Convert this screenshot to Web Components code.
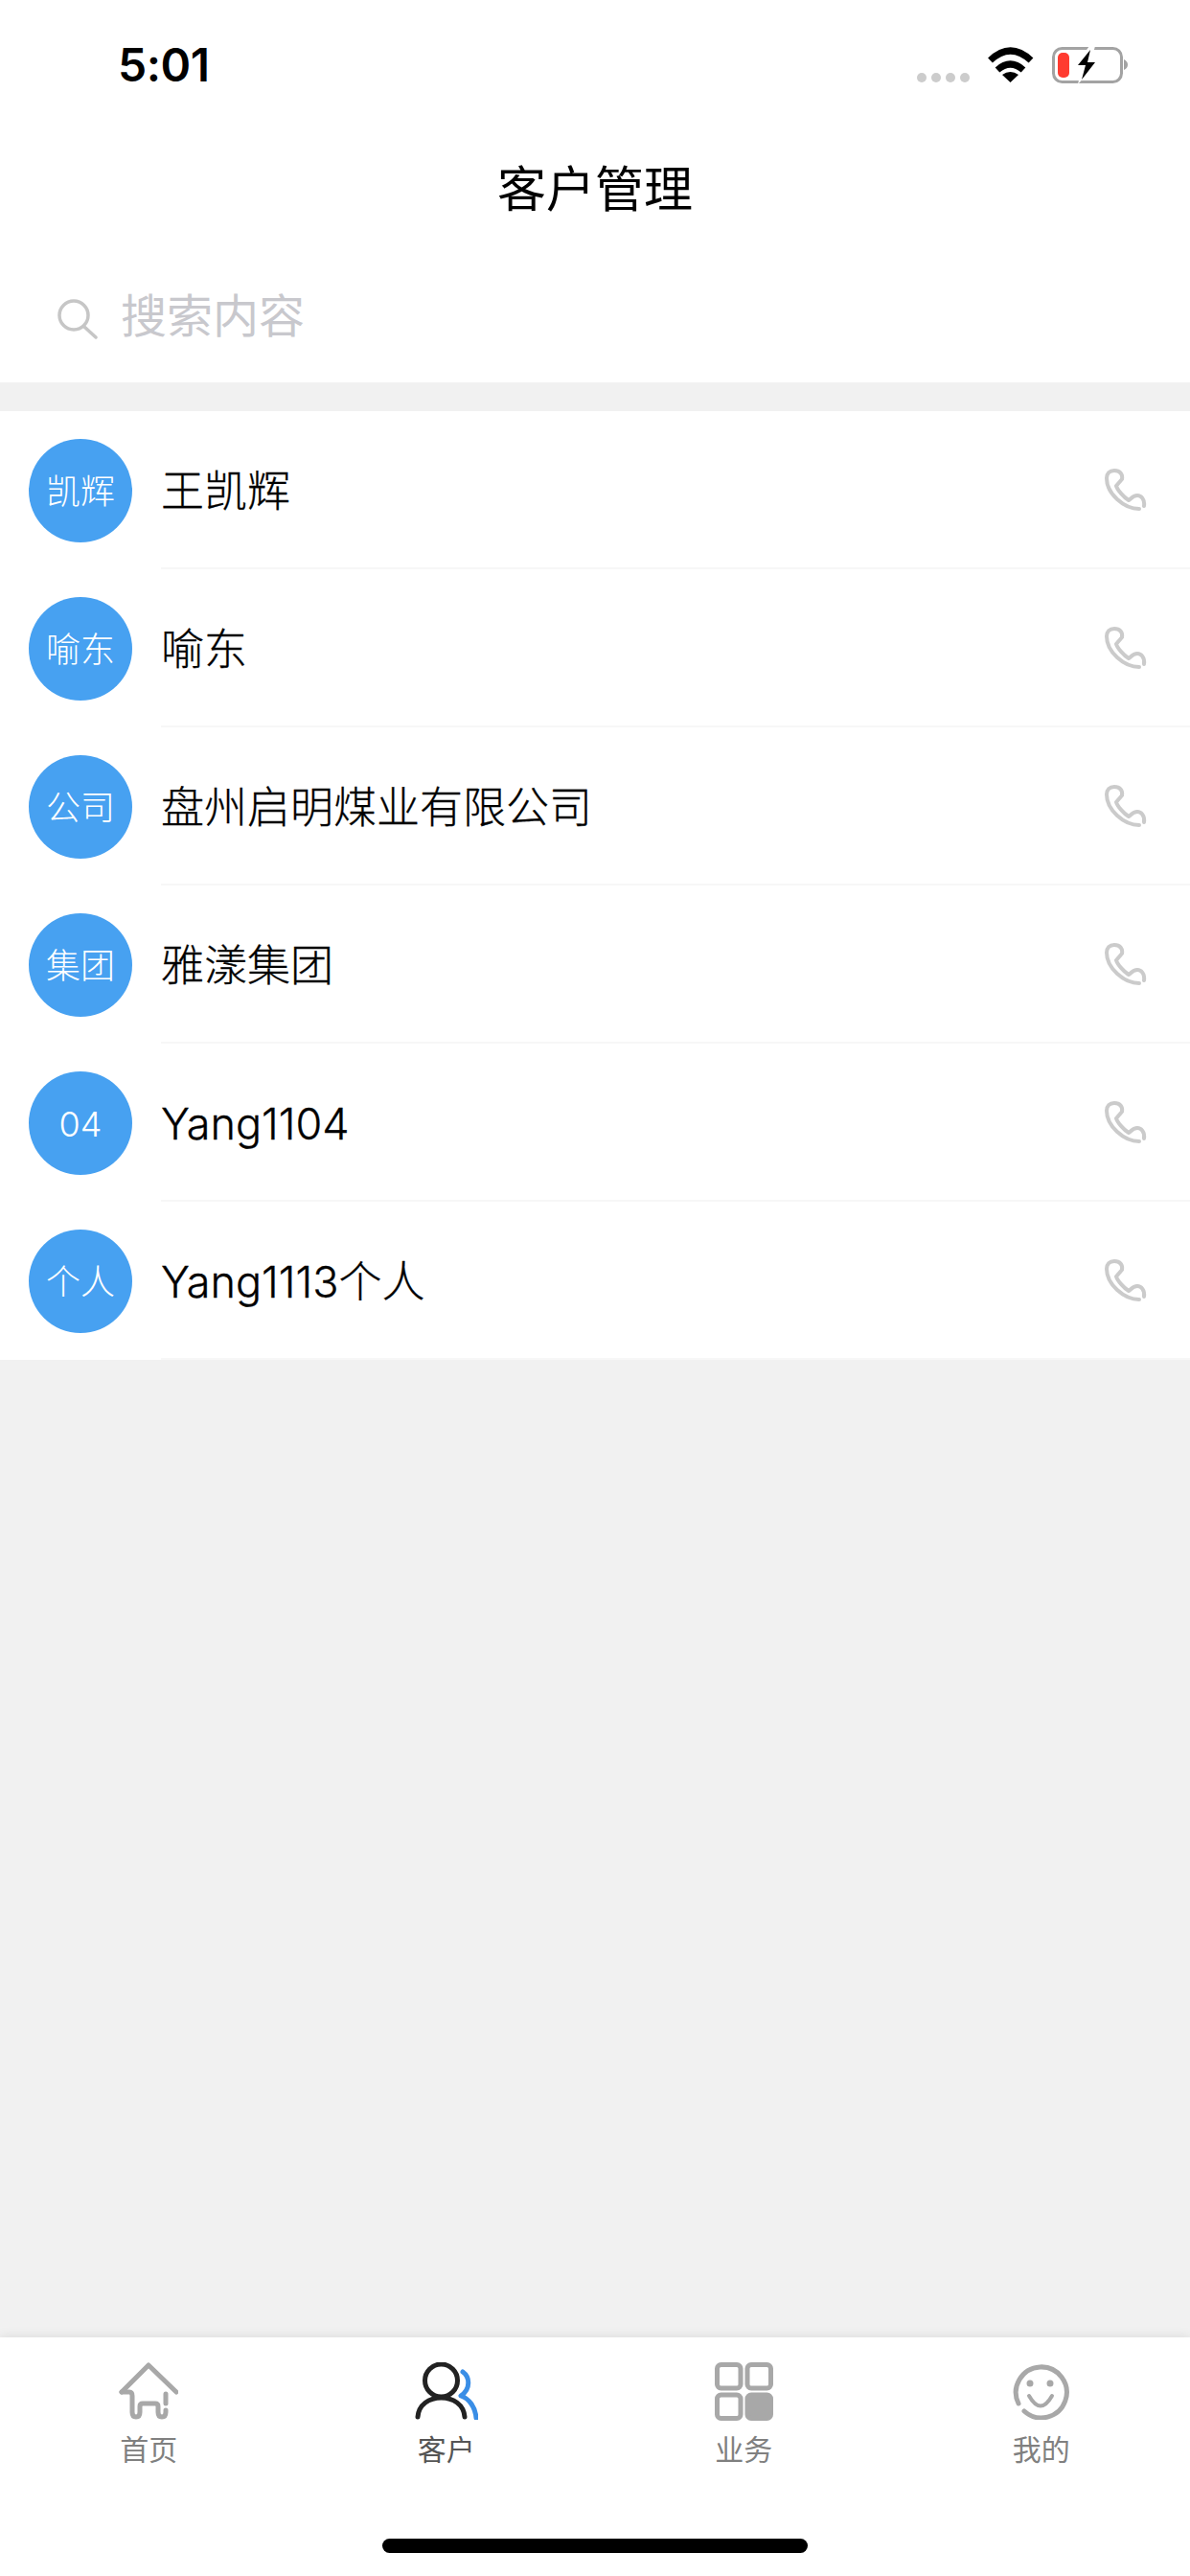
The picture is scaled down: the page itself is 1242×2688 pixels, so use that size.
<!DOCTYPE html>
<html lang="zh">
<head>
<meta charset="utf-8">
<title>客户管理</title>
<style>
html, body { margin: 0; padding: 0; background: #f1f1f1; }
body { width: 1242px; height: 2688px; font-family: Inter, "Noto Sans CJK SC", sans-serif; }
</style>
</head>
<body>
<client-app></client-app>
<script>
class StatusBar extends HTMLElement {
    constructor() {
        super();
        this.attachShadow({ mode: 'open' });
        this.shadowRoot.innerHTML = /*html*/`
        <style>
        :host { display: flex; height: 130px; box-sizing: border-box; padding: 45px 65px 0 123px; justify-content: space-between; align-items: flex-start; background: #fff; }
        .time { font: 600 48px/46px Inter, "Liberation Sans", sans-serif; color: #000; letter-spacing: -0.5px; }
        .icons { display: flex; align-items: flex-end; padding-top: 4px; }
        .dots { display: flex; gap: 5px; margin-right: 18px; margin-bottom: 1px; }
        .dots i { width: 10px; height: 10px; border-radius: 50%; background: #ccc; }
        svg { display: block; }
        .wifi { margin-right: 18px; }
        </style>
        <div class="time">5:01</div>
        <div class="icons">
            <div class="dots"><i></i><i></i><i></i><i></i></div>
            <svg class="wifi" width="50" height="38" viewBox="0 0 50 38">
                <path d="M3.5 14Q24.5 -6 46 14" fill="none" stroke="#000" stroke-width="7"/>
                <path d="M11 24Q24.5 12 38 24" fill="none" stroke="#000" stroke-width="7"/>
                <path d="M24.5 37L16 29Q24.5 23 33 29Z" fill="#000"/>
            </svg>
            <svg width="79" height="38" viewBox="0 0 79 38">
                <rect x="1.5" y="1.5" width="71" height="35" rx="9" fill="none" stroke="#a3a3a3" stroke-width="3"/>
                <rect x="6" y="6" width="12" height="26" rx="5" fill="#ff3b30"/>
                <path d="M75 13Q79 15 79 18.5Q79 22 75 24Z" fill="#a3a3a3"/>
                <path d="M39 -1L23 21H31L27 39L49 14H41L45 -1Z" fill="#fff"/>
                <path d="M40 3L27 19H35L31 34L45 16H37Z" fill="#000"/>
            </svg>
        </div>
        `;
    }
}

class NavTitle extends HTMLElement {
    constructor() {
        super();
        this.attachShadow({ mode: 'open' });
        this.shadowRoot.innerHTML = `
        <style>
        :host { display: flex; height: 135px; box-sizing: border-box; padding-bottom: 6px; align-items: center; justify-content: center; background: #fff; font: 400 51px/1 "Noto Sans CJK SC", sans-serif; color: #000; }
        </style>
        <slot></slot>
        `;
    }
}

class SearchBox extends HTMLElement {
    constructor() {
        super();
        this.attachShadow({ mode: 'open' });
        this.shadowRoot.innerHTML = `
        <style>
        :host { display: flex; height: 134px; box-sizing: border-box; padding: 0 0 12px 60px; align-items: center; background: #fff; font: 400 48px/1 "Noto Sans CJK SC", sans-serif; color: #c8c8cd; }
        svg { display: block; margin-right: 24px; margin-top: 14px; }
        </style>
        <svg width="42" height="42" viewBox="0 0 42 42" fill="none" stroke="#c6c6c6" stroke-width="3.5" stroke-linecap="round">
            <circle cx="17" cy="17" r="15"/>
            <path d="M28 29L40 40"/>
        </svg>
        <slot></slot>
        `;
    }
}

class ClientRow extends HTMLElement {
    constructor() {
        super();
        this.attachShadow({ mode: 'open' });
        this.shadowRoot.innerHTML = /*html*/`
        <style>
        :host { display: flex; height: 165px; background: #fff; }
        .avatar { flex: none; width: 108px; height: 108px; margin: 29px 30px 0; border-radius: 50%; background: #47a1f1; color: #fff; font: 300 36px/111px Inter, "Noto Sans CJK SC", sans-serif; text-align: center; white-space: nowrap; }
        .body { flex: 1; display: flex; align-items: center; justify-content: space-between; box-sizing: border-box; border-bottom: 2px solid #f7f7f7; padding: 3px 44px 0 0; font: 300 45px/1 Inter, "Noto Sans CJK SC", sans-serif; color: #000; -webkit-text-stroke: .3px #000; }
        svg { display: block; }
        </style>
        <div class="avatar"></div>
        <div class="body">
            <div class="name"><slot></slot></div>
            <svg width="46" height="48" viewBox="51 29 46 48" fill="none" stroke="#cbcbcb" stroke-width="4" stroke-linecap="round" stroke-linejoin="round">
                <path d="M88 72C72 72 54 56 54 40C54 35 57 32 62 32C68 32 71 36 70 41L64 48C65 52 72 60 77 63C79 62 81 58 86 58C90 58 94 62 93 69"/>
            </svg>
        </div>
        `;
    }

    connectedCallback() {
        this.shadowRoot.querySelector('.avatar').textContent = this.getAttribute('badge');
    }
}

class TabItem extends HTMLElement {
    constructor() {
        super();
        this.attachShadow({ mode: 'open' });
        this.shadowRoot.innerHTML = `
        <style>
        :host { flex: 1; display: flex; flex-direction: column; align-items: center; font: 400 30px/30px "Noto Sans CJK SC", sans-serif; color: var(--tab-color, #808080); }
        .icon { height: 62px; margin-bottom: 12px; display: flex; align-items: flex-start; }
        ::slotted(svg) { display: block; }
        </style>
        <div class="icon"><slot name="icon"></slot></div>
        <div><slot></slot></div>
        `;
    }
}

class TabBar extends HTMLElement {
    constructor() {
        super();
        this.attachShadow({ mode: 'open' });
        this.shadowRoot.innerHTML = `
        <style>
        :host { display: block; height: 249px; box-sizing: border-box; padding-top: 26px; position: relative; background: #fff; box-shadow: 0 -2px 10px rgba(0,0,0,.08); }
        .tabs { display: flex; }
        .home { position: absolute; left: 399px; top: 210px; width: 444px; height: 15px; border-radius: 8px; background: #000; }
        </style>
        <div class="tabs"><slot></slot></div>
        <div class="home"></div>
        `;
    }
}

class ClientApp extends HTMLElement {
    constructor() {
        super();
        this.attachShadow({ mode: 'open' });
        const clients = [
            ['凯辉', '王凯辉'],
            ['喻东', '喻东'],
            ['公司', '盘州启明煤业有限公司'],
            ['集团', '雅漾集团'],
            ['04', 'Yang1104'],
            ['个人', 'Yang1113个人']
        ];
        this.shadowRoot.innerHTML = /*html*/`
        <style>
        :host { display: flex; flex-direction: column; height: 2688px; background: #f1f1f1; }
        .list { margin-top: 30px; flex: 1; }
        </style>
        <status-bar></status-bar>
        <nav-title>客户管理</nav-title>
        <search-box>搜索内容</search-box>
        <div class="list">
            ${clients.map(c => `<client-row badge="${c[0]}">${c[1]}</client-row>`).join('')}
        </div>
        <tab-bar>
            <tab-item>
                <svg slot="icon" width="62" height="60" viewBox="0 0 62 60" fill="none" stroke="#a8a8a8" stroke-width="5" stroke-linecap="round" stroke-linejoin="round">
                    <path d="M3 31L31 3L60 31"/>
                    <path d="M3 31H11Q14 31 14 35V52Q14 57 18 57Q22 57 22 52V46Q22 43 25 43H38Q41 43 41 46V52Q41 57 45 57Q49 57 49 52V50"/>
                    <path d="M49 33V43"/>
                </svg>
                首页
            </tab-item>
            <tab-item style="--tab-color:#555">
                <svg slot="icon" width="66" height="60" viewBox="0 0 66 60" fill="none" stroke-width="5" stroke-linecap="round" stroke-linejoin="round">
                    <circle cx="27.5" cy="19" r="17" stroke="#222"/>
                    <path d="M3 57C4 44 15 37 27.5 37C40 37 51 44 52 57" stroke="#222"/>
                    <path d="M50 10C57 15 59 27 48 35C57 38 63 47 64 58" stroke="#3a8ee6"/>
                </svg>
                客户
            </tab-item>
            <tab-item>
                <svg slot="icon" width="61" height="61" viewBox="0 0 61 61" fill="none" stroke="#a8a8a8" stroke-width="5">
                    <rect x="2.5" y="2.5" width="24.5" height="24.5" rx="4"/>
                    <rect x="34" y="2.5" width="24.5" height="24.5" rx="4"/>
                    <rect x="2.5" y="34" width="24.5" height="24.5" rx="4"/>
                    <rect x="34" y="34" width="24.5" height="24.5" rx="4" fill="#a8a8a8"/>
                </svg>
                业务
            </tab-item>
            <tab-item>
                <svg slot="icon" width="60" height="60" viewBox="0 0 60 60" fill="none" stroke="#a8a8a8" stroke-width="5" stroke-linecap="round">
                    <path d="M12 51A26.5 26.5 0 1 0 6 43"/>
                    <circle cx="18" cy="22" r="3.5" fill="#a8a8a8" stroke="none"/>
                    <circle cx="39" cy="22" r="3.5" fill="#a8a8a8" stroke="none"/>
                    <path d="M17 35Q29 56 41 35" stroke-width="4"/>
                </svg>
                我的
            </tab-item>
        </tab-bar>
        `;
    }
}

customElements.define('status-bar', StatusBar);
customElements.define('nav-title', NavTitle);
customElements.define('search-box', SearchBox);
customElements.define('client-row', ClientRow);
customElements.define('tab-item', TabItem);
customElements.define('tab-bar', TabBar);
customElements.define('client-app', ClientApp);
</script>
</body>
</html>
